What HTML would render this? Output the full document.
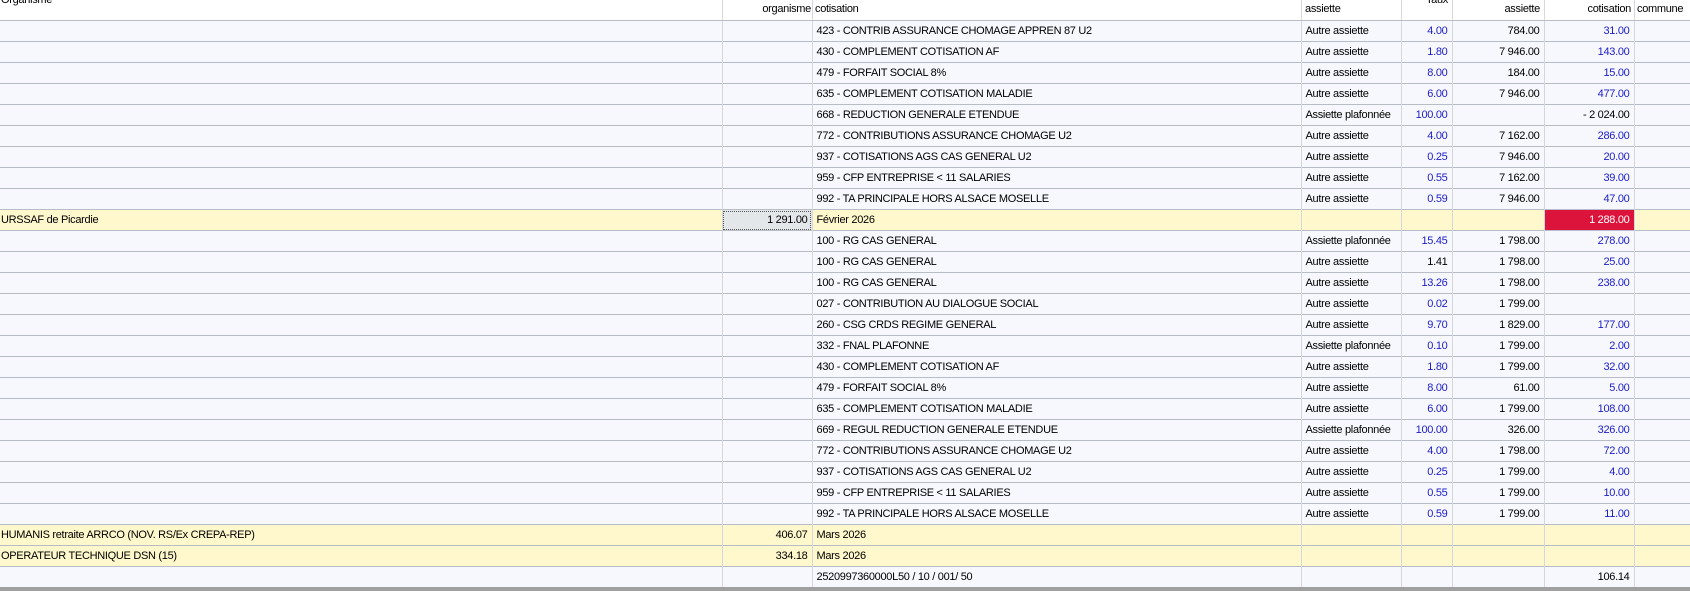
<!DOCTYPE html>
<html><head><meta charset="utf-8"><style>
*{margin:0;padding:0;box-sizing:border-box}
body{width:1690px;height:591px;overflow:hidden;background:#fff;font-family:"Liberation Sans",Arial,sans-serif;font-size:11px;color:#000;position:relative;letter-spacing:-0.3px}
.h{position:absolute;top:3px;white-space:nowrap}
table{position:absolute;left:0;top:20px;border-collapse:collapse;table-layout:fixed;width:1690px}
td{height:21px;border-top:1px solid #b8bcc4;border-left:1px solid #d4d8de;background:#f7f8fd;padding:0 4px;white-space:nowrap;overflow:hidden;vertical-align:middle;line-height:20px}
td:first-child{border-left:none;padding-left:1px}
.r{text-align:right}
.b{color:#1c1cc8}
tr.y td{background:#fff8cc}
tr.y td.f{background:#e3e7ea;outline:1px dotted #555;outline-offset:-2px}
tr.y td.red{background:#dc143c;color:#fff}
.bar{position:absolute;left:0;top:587px;width:1690px;height:4px;background:#a0a0a0}
.hl{position:absolute;top:0;height:20px;width:1px;background:#d4d8de}
</style></head><body>
<div class="h" style="left:1px;top:-6px">Organisme</div>
<div class="h" style="left:724px;width:87px;text-align:right">organisme</div>
<div class="h" style="left:815px">cotisation</div>
<div class="h" style="left:1305px">assiette</div>
<div class="h" style="left:1402px;width:46px;text-align:right;top:-6px">Taux</div>
<div class="h" style="left:1453px;width:87px;text-align:right">assiette</div>
<div class="h" style="left:1545px;width:86px;text-align:right">cotisation</div>
<div class="h" style="left:1637px">commune</div>
<div class="hl" style="left:722px"></div><div class="hl" style="left:812px"></div><div class="hl" style="left:1301px"></div><div class="hl" style="left:1401px"></div><div class="hl" style="left:1452px"></div><div class="hl" style="left:1544px"></div><div class="hl" style="left:1634px"></div>
<table>
<colgroup><col style="width:722px"><col style="width:90px"><col style="width:489px"><col style="width:100px"><col style="width:51px"><col style="width:92px"><col style="width:90px"><col style="width:56px"></colgroup>
<tr><td></td><td></td><td>423 - CONTRIB ASSURANCE CHOMAGE APPREN 87 U2</td><td>Autre assiette</td><td class="r b">4.00</td><td class="r">784.00</td><td class="r b">31.00</td><td></td></tr>
<tr><td></td><td></td><td>430 - COMPLEMENT COTISATION AF</td><td>Autre assiette</td><td class="r b">1.80</td><td class="r">7 946.00</td><td class="r b">143.00</td><td></td></tr>
<tr><td></td><td></td><td>479 - FORFAIT SOCIAL 8%</td><td>Autre assiette</td><td class="r b">8.00</td><td class="r">184.00</td><td class="r b">15.00</td><td></td></tr>
<tr><td></td><td></td><td>635 - COMPLEMENT COTISATION MALADIE</td><td>Autre assiette</td><td class="r b">6.00</td><td class="r">7 946.00</td><td class="r b">477.00</td><td></td></tr>
<tr><td></td><td></td><td>668 - REDUCTION GENERALE ETENDUE</td><td>Assiette plafonnée</td><td class="r b">100.00</td><td class="r"></td><td class="r">- 2 024.00</td><td></td></tr>
<tr><td></td><td></td><td>772 - CONTRIBUTIONS ASSURANCE CHOMAGE U2</td><td>Autre assiette</td><td class="r b">4.00</td><td class="r">7 162.00</td><td class="r b">286.00</td><td></td></tr>
<tr><td></td><td></td><td>937 - COTISATIONS AGS CAS GENERAL U2</td><td>Autre assiette</td><td class="r b">0.25</td><td class="r">7 946.00</td><td class="r b">20.00</td><td></td></tr>
<tr><td></td><td></td><td>959 - CFP ENTREPRISE &lt; 11 SALARIES</td><td>Autre assiette</td><td class="r b">0.55</td><td class="r">7 162.00</td><td class="r b">39.00</td><td></td></tr>
<tr><td></td><td></td><td>992 - TA PRINCIPALE HORS ALSACE MOSELLE</td><td>Autre assiette</td><td class="r b">0.59</td><td class="r">7 946.00</td><td class="r b">47.00</td><td></td></tr>
<tr class="y"><td>URSSAF de Picardie</td><td class="r f">1 291.00</td><td>Février 2026</td><td></td><td></td><td></td><td class="r red">1 288.00</td><td></td></tr>
<tr><td></td><td></td><td>100 - RG CAS GENERAL</td><td>Assiette plafonnée</td><td class="r b">15.45</td><td class="r">1 798.00</td><td class="r b">278.00</td><td></td></tr>
<tr><td></td><td></td><td>100 - RG CAS GENERAL</td><td>Autre assiette</td><td class="r">1.41</td><td class="r">1 798.00</td><td class="r b">25.00</td><td></td></tr>
<tr><td></td><td></td><td>100 - RG CAS GENERAL</td><td>Autre assiette</td><td class="r b">13.26</td><td class="r">1 798.00</td><td class="r b">238.00</td><td></td></tr>
<tr><td></td><td></td><td>027 - CONTRIBUTION AU DIALOGUE SOCIAL</td><td>Autre assiette</td><td class="r b">0.02</td><td class="r">1 799.00</td><td class="r b"></td><td></td></tr>
<tr><td></td><td></td><td>260 - CSG CRDS REGIME GENERAL</td><td>Autre assiette</td><td class="r b">9.70</td><td class="r">1 829.00</td><td class="r b">177.00</td><td></td></tr>
<tr><td></td><td></td><td>332 - FNAL PLAFONNE</td><td>Assiette plafonnée</td><td class="r b">0.10</td><td class="r">1 799.00</td><td class="r b">2.00</td><td></td></tr>
<tr><td></td><td></td><td>430 - COMPLEMENT COTISATION AF</td><td>Autre assiette</td><td class="r b">1.80</td><td class="r">1 799.00</td><td class="r b">32.00</td><td></td></tr>
<tr><td></td><td></td><td>479 - FORFAIT SOCIAL 8%</td><td>Autre assiette</td><td class="r b">8.00</td><td class="r">61.00</td><td class="r b">5.00</td><td></td></tr>
<tr><td></td><td></td><td>635 - COMPLEMENT COTISATION MALADIE</td><td>Autre assiette</td><td class="r b">6.00</td><td class="r">1 799.00</td><td class="r b">108.00</td><td></td></tr>
<tr><td></td><td></td><td>669 - REGUL REDUCTION GENERALE ETENDUE</td><td>Assiette plafonnée</td><td class="r b">100.00</td><td class="r">326.00</td><td class="r b">326.00</td><td></td></tr>
<tr><td></td><td></td><td>772 - CONTRIBUTIONS ASSURANCE CHOMAGE U2</td><td>Autre assiette</td><td class="r b">4.00</td><td class="r">1 798.00</td><td class="r b">72.00</td><td></td></tr>
<tr><td></td><td></td><td>937 - COTISATIONS AGS CAS GENERAL U2</td><td>Autre assiette</td><td class="r b">0.25</td><td class="r">1 799.00</td><td class="r b">4.00</td><td></td></tr>
<tr><td></td><td></td><td>959 - CFP ENTREPRISE &lt; 11 SALARIES</td><td>Autre assiette</td><td class="r b">0.55</td><td class="r">1 799.00</td><td class="r b">10.00</td><td></td></tr>
<tr><td></td><td></td><td>992 - TA PRINCIPALE HORS ALSACE MOSELLE</td><td>Autre assiette</td><td class="r b">0.59</td><td class="r">1 799.00</td><td class="r b">11.00</td><td></td></tr>
<tr class="y"><td>HUMANIS retraite ARRCO (NOV. RS/Ex CREPA-REP)</td><td class="r">406.07</td><td>Mars 2026</td><td></td><td></td><td></td><td></td><td></td></tr>
<tr class="y"><td>OPERATEUR TECHNIQUE DSN (15)</td><td class="r">334.18</td><td>Mars 2026</td><td></td><td></td><td></td><td></td><td></td></tr>
<tr><td></td><td></td><td>2520997360000L50 / 10 / 001/ 50</td><td></td><td></td><td></td><td class="r">106.14</td><td></td></tr>
</table>
<div class="bar"></div>
</body></html>
